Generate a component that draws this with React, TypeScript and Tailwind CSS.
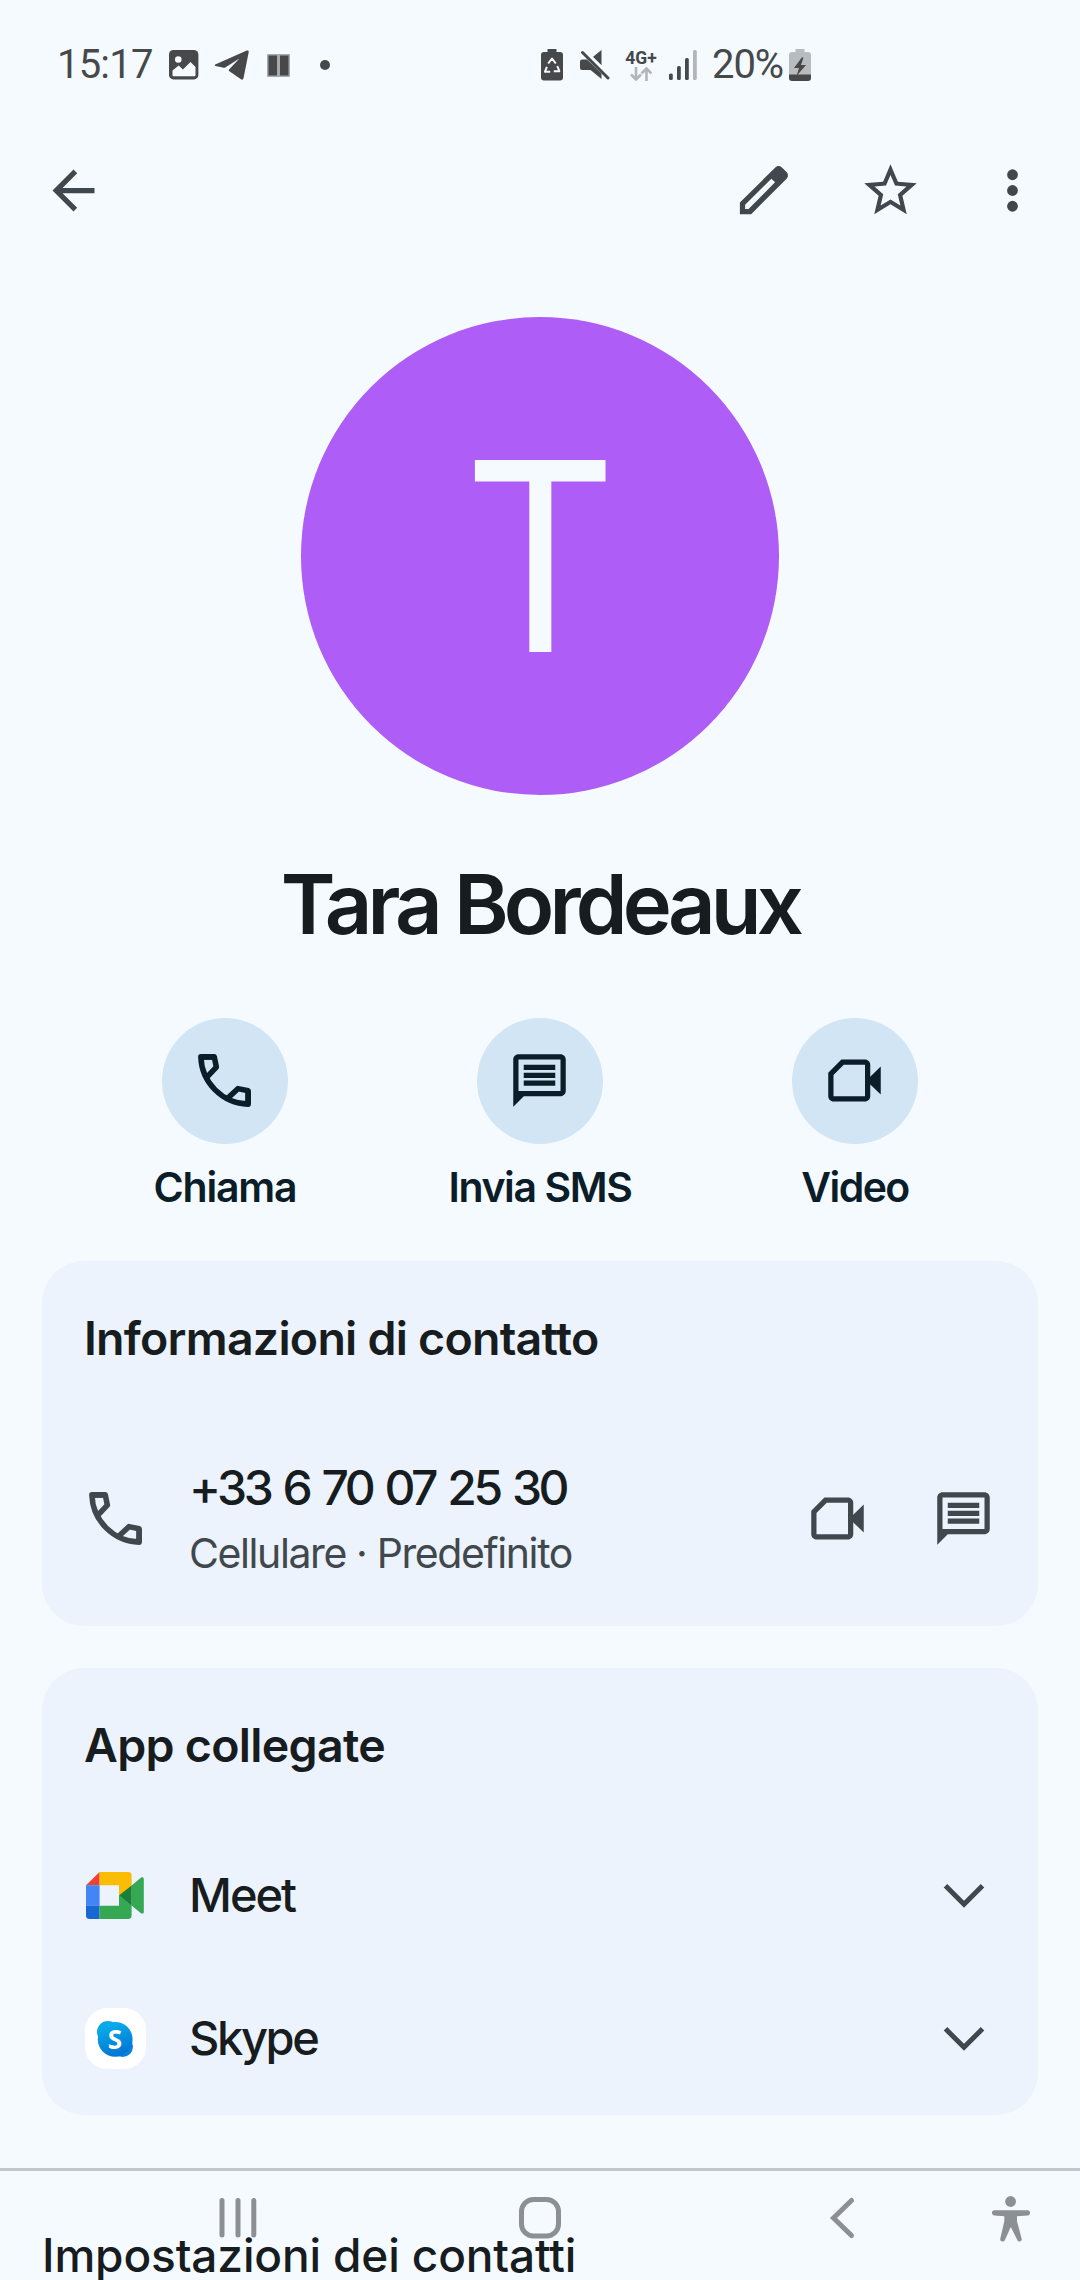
import React from 'react';

type IconProps = { className?: string };

function BackIcon() {
  return (
    <svg viewBox="0 0 24 24" className="size-[63px]" fill="currentColor">
      <path d="M20 11H7.83l5.59-5.59L12 4l-8 8 8 8 1.41-1.41L7.83 13H20v-2z" />
    </svg>
  );
}

function EditIcon() {
  return (
    <svg viewBox="0 0 24 24" className="size-[63px]" fill="currentColor" fillRule="evenodd">
      <path d="M3 16.6V21h4.3L20.7 7.6c.8-.8.8-1.9 0-2.7l-1.6-1.6c-.8-.8-1.9-.8-2.7 0L3 16.6zM5 17.4 15 7.5l1.4 1.4L6.3 19H5v-1.6z" />
    </svg>
  );
}

function StarIcon() {
  return (
    <svg viewBox="0 0 24 24" className="size-[63px]" fill="currentColor">
      <path d="M22 9.24l-7.19-.62L12 2 9.19 8.63 2 9.24l5.46 4.73L5.82 21 12 17.27 18.18 21l-1.63-7.03L22 9.24zM12 15.4l-3.76 2.27 1-4.28-3.32-2.88 4.38-.38L12 6.1l1.71 4.04 4.38.38-3.32 2.88 1 4.28L12 15.4z" />
    </svg>
  );
}

function MoreIcon() {
  return (
    <svg viewBox="0 0 24 24" className="size-[63px]" fill="currentColor">
      <circle cx="12" cy="6" r="2.05" />
      <circle cx="12" cy="12" r="2.05" />
      <circle cx="12" cy="18" r="2.05" />
    </svg>
  );
}

function PhoneIcon({ className }: IconProps) {
  return (
    <svg viewBox="0 0 24 24" className={className} fill="none" stroke="currentColor" strokeWidth="2.1" strokeLinejoin="round">
      <path d="M3 3h5.1l.8 3.9-3.6 3.8M21 21v-5.1l-3.9-.8-3.8 3.6" />
      <path d="M8.1 3H3c.3 9.8 8.2 17.7 18 18v-5.1" />
    </svg>
  );
}

function MessageIcon({ className }: IconProps) {
  return (
    <svg viewBox="0 0 24 24" className={className} fill="currentColor">
      <path fillRule="evenodd" d="M20 2H4c-1.1 0-2 .9-2 2v18l4-4h14c1.1 0 2-.9 2-2V4c0-1.1-.9-2-2-2zM4 4h16v12H4V4z" />
      <path d="M6 6h12v2H6zM6 9h12v2H6zM6 12h12v2H6z" />
    </svg>
  );
}

function VideoIcon({ className }: IconProps) {
  return (
    <svg viewBox="0 0 24 24" className={className} fill="currentColor">
      <path fillRule="evenodd" d="M7 4h9c1.1 0 2 .9 2 2v12c0 1.1-.9 2-2 2H4c-1.1 0-2-.9-2-2V9l5-5zM7.9 6 4 9.9V18h12V6H7.9z" />
      <path d="M17.5 11 22 6.7v10.6L17.5 13z" />
    </svg>
  );
}

function ChevronDown() {
  return (
    <svg viewBox="0 0 42 26" className="h-[26px] w-[42px]" fill="none" stroke="currentColor" strokeWidth="5">
      <path d="M2.5 2.8 21 21.3 39.5 2.8" />
    </svg>
  );
}

function MeetLogo() {
  return (
    <svg viewBox="0 0 58 47" className="h-[47px] w-[58px]">
      <path d="M0 13.2 13.6 0v13.2z" fill="#ea4335" />
      <path d="M0 13.2h13.6v20.6H0z" fill="#4285f4" />
      <path d="M0 33.8h13.6V47H3.4A3.4 3.4 0 0 1 0 43.6z" fill="#1967d2" />
      <path d="M13.6 0h28.6a3.4 3.4 0 0 1 3.4 3.4v15L33 23.6V13.2H13.6z" fill="#fbbc04" />
      <path d="M13.6 33.8H33V23.6l12.6 9.8v10.2a3.4 3.4 0 0 1-3.4 3.4H13.6z" fill="#34a853" />
      <path d="M45.6 13.4 54.8 5.8c1.2-1 3-.4 3 1.2v33c0 1.6-1.6 2.2-2.8 1.2l-9.4-7.6z" fill="#34a853" />
      <path d="M33 23.6l12.6-10.2v20.4z" fill="#188038" />
    </svg>
  );
}

function SkypeLogo() {
  return (
    <div className="flex size-[61px] items-center justify-center rounded-[22px] bg-white">
      <svg viewBox="0 0 36 36" className="size-9">
        <defs>
          <linearGradient id="skype" x1="0" y1="0" x2="0.3" y2="1">
            <stop offset="0" stopColor="#0bb5ee" />
            <stop offset="1" stopColor="#0277d4" />
          </linearGradient>
        </defs>
        <circle cx="11" cy="11" r="11" fill="#0aa9e6" />
        <circle cx="25.5" cy="25.5" r="10.5" fill="#0584dc" />
        <circle cx="18.2" cy="18.4" r="17.4" fill="url(#skype)" />
        <text x="18" y="27.6" textAnchor="middle" fontFamily="Open Sans" fontWeight="700" fontSize="26" fill="#fff">
          S
        </text>
      </svg>
    </div>
  );
}

function StatusBar() {
  return (
    <div className="flex h-32 items-center pt-0.5 pl-[57px] font-['Roboto'] text-[#47484a]">
      <span className="w-[112px] text-[40px] leading-[48px] font-[450] tracking-[-0.8px]">15:17</span>
      <svg viewBox="0 0 30 30" className="size-[30px]">
        <rect width="29.4" height="29.4" rx="4.5" fill="currentColor" />
        <circle cx="9.3" cy="9.5" r="3.3" fill="#f5faff" />
        <path d="M3.5 25.2v-4.6l6.2-5.2 4.2 4.2 7.6-7.6 5 5v8.2a1 1 0 0 1-1 1h-21a1 1 0 0 1-1-1z" fill="#f5faff" />
      </svg>
      <svg viewBox="0 0 36 30" className="ml-[15px] h-[30px] w-9" fill="currentColor">
        <path d="M1.2 14.6 32.8.6c1.3-.5 2.2.2 1.9 1.6l-5.2 26c-.3 1.4-1.4 1.8-2.5 1.1l-11.6-8c-.8-.6-.8-1.4-.1-2.1L25.4 8.6 11.6 17.2c-1 .6-1.8.6-2.9.3l-7.3-1.6c-.8-.3-.8-1-.2-1.3z" />
      </svg>
      <svg viewBox="0 0 23 23" className="ml-[17px] size-[23px]" fill="currentColor">
        <rect width="23" height="23" rx="1" opacity="0.45" />
        <path d="M1.5 1.5H10v20H1.500zM13 1.500h8.500v20H13z" />
      </svg>
      <span className="ml-[30px] size-2.5 rounded-full bg-[#47484a]" />
      <svg viewBox="0 0 22 32" className="ml-[211px] h-8 w-[22px]" fill="currentColor">
        <path d="M6.5 0h9v3H19a3 3 0 0 1 3 3v22.5a3 3 0 0 1-3 3H3a3 3 0 0 1-3-3V6a3 3 0 0 1 3-3h3.5z" />
        <g stroke="#f5faff" fill="none" strokeWidth="2" strokeLinejoin="round">
          <path d="m7.2 14.5 3.8-5 3.8 5M16.3 17l2 5.2h-5.5M9.2 22.8H3.9l2-5" />
        </g>
      </svg>
      <svg viewBox="0 0 30 30" className="ml-[17px] size-[30px]" fill="currentColor">
        <path d="M21.5 0v15.5L12.8 7z" />
        <path d="M2 9.5h5l14.5 14V29l-11-9H2a2 2 0 0 1-2-2v-6.5a2 2 0 0 1 2-2z" />
        <path d="m4.500.5 25 25" stroke="#f5faff" strokeWidth="3" />
        <path d="M2.5 2.5 28 28" stroke="currentColor" strokeWidth="3" strokeLinecap="round" />
      </svg>
      <div className="ml-[15px] flex w-8 flex-col items-center">
        <span className="text-[17.5px] leading-4 font-bold">4G+</span>
        <svg viewBox="0 0 22 14" className="mt-px h-3.5 w-[22px]" fill="none" stroke="#b3b6b9" strokeWidth="2.6">
          <path d="M6 0v12M1 7.5l5 5 5-5M16.5 14V2M11.5 6.500l5-5 5 5" />
        </svg>
      </div>
      <svg viewBox="0 0 28 30" className="ml-[12px] h-[30px] w-7" fill="currentColor">
        <rect y="23.5" width="3.8" height="6.5" rx="1.5" />
        <rect x="8" y="16" width="3.8" height="14" rx="1.5" />
        <rect x="16" y="8" width="3.8" height="22" rx="1.5" />
        <rect x="24" y="0" width="3.8" height="30" rx="1.5" fill="#b3b6b9" />
      </svg>
      <span className="ml-[15px] w-[77px] text-[40px] leading-[48px] font-[450] tracking-[-1.1px]">20%</span>
      <svg viewBox="0 0 22 32" className="h-8 w-[22px]">
        <path d="M6.5 0h9v3H19a3 3 0 0 1 3 3v20H0V6a3 3 0 0 1 3-3h3.5z" fill="#b8bcc0" />
        <path d="M0 25.5h22V29a3 3 0 0 1-3 3H3a3 3 0 0 1-3-3z" fill="#47484a" />
        <path d="M12.8 8.5 5 19h5l-2.5 8L17 16h-5l2.5-7.5z" fill="#47484a" />
      </svg>
    </div>
  );
}

function NavigationBar() {
  return (
    <div className="absolute inset-x-0 bottom-0 h-[84px] text-[#8c9093]">
      <svg viewBox="0 0 1080 84" className="h-[84px] w-full" fill="none" stroke="currentColor" strokeWidth="5" strokeLinecap="round">
        <path d="M222 4.5V39M238 4.5V39M253.800 4.500V39" />
        <rect x="521.5" y="3.5" width="37" height="36.5" rx="12" />
        <path d="M851.5 4.500 833.500 22l18 17.500" />
        <circle cx="1010.6" cy="5.5" r="5.4" fill="currentColor" stroke="none" />
        <path
          d="M994.5 14.3h33c3.4 0 3.4 5 0 5.2l-10.5.7v5l4.7 17.5c.7 3-3.4 4-4.4 1.4L1010.8 31l-5.900 13c-1.100 2.600-5.300 1.700-4.600-1.400l4-17.400v-5l-9.800-.7c-3.400-.2-3.400-5.200 0-5.200z"
          fill="currentColor"
          stroke="none"
        />
      </svg>
    </div>
  );
}

const actions = [
  { label: 'Chiama', icon: PhoneIcon, labelClass: 'tracking-[-1.2px]' },
  { label: 'Invia SMS', icon: MessageIcon, labelClass: 'tracking-[-1.4px]' },
  { label: 'Video', icon: VideoIcon, labelClass: 'tracking-[-1.6px]' },
];

const linkedApps = [
  { name: 'Meet', logo: <MeetLogo />, nameClass: 'tracking-[-2px]' },
  { name: 'Skype', logo: <SkypeLogo />, nameClass: 'tracking-[-2.4px]' },
];

export default function App() {
  return (
    <div className="relative h-[2280px] w-[1080px] overflow-hidden bg-[#f5faff] font-['Inter',sans-serif] text-[#171c1f]">
      <StatusBar />

      <header className="flex h-[125px] items-center pl-[42px] text-[#41484d]">
        <BackIcon />
        <div className="ml-auto flex items-center pr-9">
          <EditIcon />
          <div className="ml-[64px]">
            <StarIcon />
          </div>
          <div className="ml-[59px]">
            <MoreIcon />
          </div>
        </div>
      </header>

      <div className="mx-auto mt-16 flex size-[478px] items-center justify-center rounded-full bg-[#ae5df6]">
        <span className="scale-x-[0.9] text-[264px] leading-none text-[#f5faff]">T</span>
      </div>

      <h1 className="mt-[59px] text-center text-[83px] leading-[100px] font-[560] tracking-[-4.8px] whitespace-nowrap">
        Tara Bordeaux
      </h1>

      <div className="mt-16 grid grid-cols-3 px-[67.5px] text-[#0b1d29]">
        {actions.map(({ label, icon: Icon, labelClass }) => (
          <div key={label} className="flex flex-col items-center">
            <div className="flex size-[126px] items-center justify-center rounded-full bg-[#d1e5f4] pr-0.5 pb-0.5">
              <Icon className="size-[63px]" />
            </div>
            <span className={`mt-[19px] text-[41px] leading-[48px] font-semibold whitespace-nowrap ${labelClass}`}>{label}</span>
          </div>
        ))}
      </div>

      <section className="mx-[42px] mt-[50px] h-[365px] rounded-[42px] bg-[#ecf3fc] pt-[47px] pr-[43px] pl-[42px]">
        <h2 className="text-[46.5px] leading-[60px] font-semibold tracking-[-0.75px] whitespace-nowrap">Informazioni di contatto</h2>
        <div className="mt-[90px] flex items-center text-[#41484d]">
          <PhoneIcon className="mb-0.5 size-[63px]" />
          <div className="ml-[42px] whitespace-nowrap">
            <p className="text-[48px] leading-[60px] font-medium tracking-[-3.5px] text-[#171c1f] [word-spacing:3px]">+33 6 70 07 25 30</p>
            <p className="mt-[7px] text-[41px] leading-[56px] font-[430] tracking-[-1.4px]">Cellulare · Predefinito</p>
          </div>
          <VideoIcon className="mb-0.5 ml-auto size-[63px]" />
          <MessageIcon className="mb-0.5 ml-[63px] size-[63px]" />
        </div>
      </section>

      <section className="mx-[42px] mt-[42px] h-[447px] rounded-[42px] bg-[#ecf3fc] px-[42px] pt-[47px]">
        <h2 className="text-[46.5px] leading-[60px] font-semibold tracking-[-0.7px] whitespace-nowrap">App collegate</h2>
        <div className="mt-[48px]">
          {linkedApps.map((app) => (
            <div key={app.name} className="flex h-[143px] items-center pr-[11px]">
              <div className="flex w-[62px] justify-center pt-0.5">{app.logo}</div>
              <span className={`ml-[43px] text-[47px] leading-[60px] font-medium ${app.nameClass}`}>{app.name}</span>
              <div className="ml-auto pt-[3px] text-[#41484d]">
                <ChevronDown />
              </div>
            </div>
          ))}
        </div>
      </section>

      <div className="mt-[53px] h-[3px] bg-[#c1c7cc]" />

      <NavigationBar />
      <p className="relative mt-[54px] pl-[42px] text-[46px] leading-[60px] font-medium tracking-[-0.15px] whitespace-nowrap">
        Impostazioni dei contatti
      </p>
    </div>
  );
}
